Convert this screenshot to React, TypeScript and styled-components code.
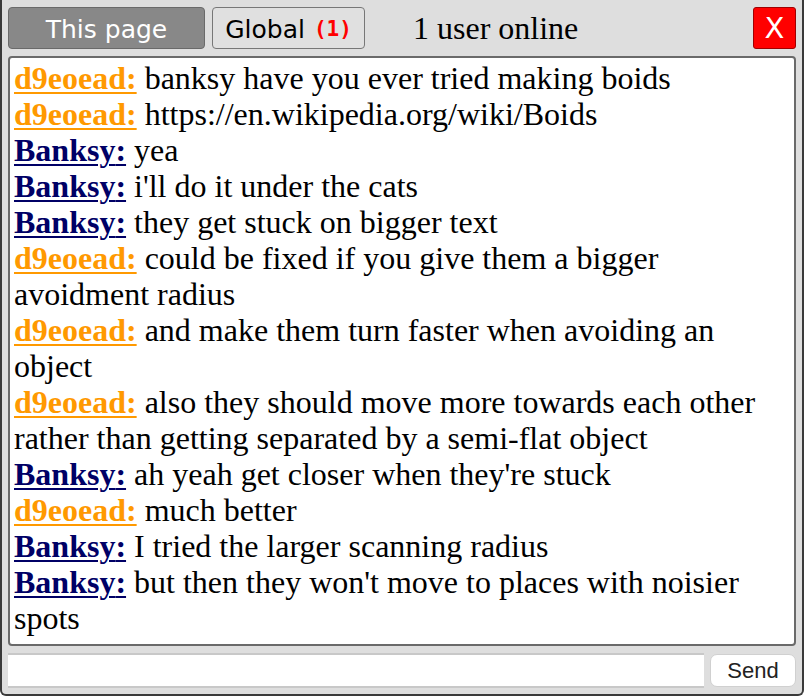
import React from "react";
import styled, { createGlobalStyle } from "styled-components";

const GlobalStyle = createGlobalStyle`
  html, body { margin: 0; padding: 0; background: #ffffff; }
  * { box-sizing: border-box; }
`;

const Window = styled.div`
  width: 804px;
  height: 696px;
  background: #dedede;
  border: 2px solid #3a3a3a;
  border-top: none;
  border-radius: 0 0 6px 6px;
  padding: 7px 6px 5px 6px;
  display: flex;
  flex-direction: column;
  gap: 7px;
  overflow: hidden;
`;

const TopBar = styled.div`
  display: flex;
  align-items: center;
  height: 42px;
  flex-shrink: 0;
`;

const TabButton = styled.button<{ $active?: boolean; $width: number }>`
  height: 42px;
  width: ${(p) => p.$width}px;
  margin-right: 7px;
  border-radius: 4px;
  border: 1.5px solid ${(p) => (p.$active ? "#6a6a6a" : "#777777")};
  background: ${(p) => (p.$active ? "#888888" : "#e0e0e0")};
  color: ${(p) => (p.$active ? "#ffffff" : "#000000")};
  font-family: "DejaVu Sans", Verdana, sans-serif;
  font-size: 25px;
  padding: 2px 0 0 0;
  display: flex;
  align-items: center;
  justify-content: center;
  gap: 9px;
  cursor: pointer;
`;

const Count = styled.span`
  color: #ff0000;
  font-family: "DejaVu Sans Mono", "Liberation Mono", monospace;
  font-weight: bold;
  font-size: 21px;
`;

const Online = styled.span`
  font-family: "Liberation Serif", "Times New Roman", serif;
  font-size: 32px;
  color: #000;
  margin-left: 41px;
  flex: 1;
`;

const CloseButton = styled.button`
  width: 43px;
  height: 42px;
  background: #ff0000;
  border: 1.5px solid #a00000;
  border-radius: 3px;
  color: #ffffff;
  font-family: "DejaVu Sans", Verdana, sans-serif;
  font-size: 29px;
  padding: 0;
  display: flex;
  align-items: center;
  justify-content: center;
`;

const ChatBox = styled.div`
  height: 590px;
  flex-shrink: 0;
  background: #ffffff;
  border: 2px solid #6a6a6a;
  border-radius: 4px;
  padding: 2px 4px;
  overflow: hidden;
  font-family: "Liberation Serif", "Times New Roman", serif;
  font-size: 32px;
  line-height: 36px;
  color: #000;
`;

const Message = styled.div``;

const Name = styled.a<{ $color: string }>`
  color: ${(p) => p.$color};
  font-weight: bold;
  text-decoration: underline;
  text-decoration-thickness: 2px;
  text-underline-offset: 3px;
`;

const InputRow = styled.div`
  display: flex;
  align-items: center;
  gap: 6px;
  height: 35px;
  flex-shrink: 0;
`;

const TextInput = styled.input`
  flex: 1;
  height: 35px;
  border: none;
  border-top: 2px solid #c8c8c8;
  border-bottom: 2px solid #c8c8c8;
  background: #ffffff;
  outline: none;
`;

const SendButton = styled.button`
  width: 86px;
  height: 33px;
  background: #ffffff;
  border: 1px solid #d0d0d0;
  border-radius: 7px;
  font-family: "Liberation Sans", Arial, sans-serif;
  font-size: 22px;
  color: #222;
  padding: 0;
`;

const ORANGE = "#ff9900";
const NAVY = "#000066";

const messages: { name: string; text: string }[] = [
  { name: "d9eoead", text: "banksy have you ever tried making boids" },
  { name: "d9eoead", text: "https://en.wikipedia.org/wiki/Boids" },
  { name: "Banksy", text: "yea" },
  { name: "Banksy", text: "i'll do it under the cats" },
  { name: "Banksy", text: "they get stuck on bigger text" },
  { name: "d9eoead", text: "could be fixed if you give them a bigger avoidment radius" },
  { name: "d9eoead", text: "and make them turn faster when avoiding an object" },
  {
    name: "d9eoead",
    text: "also they should move more towards each other rather than getting separated by a semi-flat object",
  },
  { name: "Banksy", text: "ah yeah get closer when they're stuck" },
  { name: "d9eoead", text: "much better" },
  { name: "Banksy", text: "I tried the larger scanning radius" },
  { name: "Banksy", text: "but then they won't move to places with noisier spots" },
];

export default function App() {
  return (
    <>
      <GlobalStyle />
      <Window>
        <TopBar>
          <TabButton $active $width={197}>This page</TabButton>
          <TabButton $width={153}>
            Global <Count>(1)</Count>
          </TabButton>
          <Online>1 user online</Online>
          <CloseButton>X</CloseButton>
        </TopBar>
        <ChatBox>
          {messages.map((m, i) => (
            <Message key={i}>
              <Name href="#" $color={m.name === "Banksy" ? NAVY : ORANGE}>
                {m.name}:
              </Name>{" "}
              {m.text}
            </Message>
          ))}
        </ChatBox>
        <InputRow>
          <TextInput />
          <SendButton>Send</SendButton>
        </InputRow>
      </Window>
    </>
  );
}
